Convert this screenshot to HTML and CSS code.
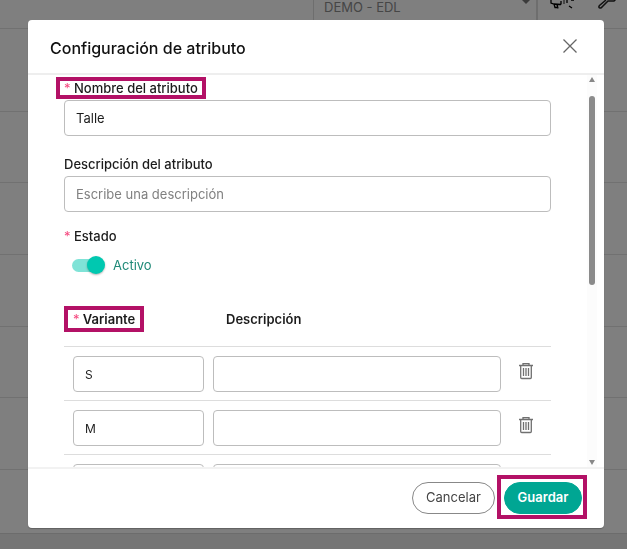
FILE: index.html
```html
<!DOCTYPE html>
<html lang="es">
<head>
<meta charset="utf-8">
<meta name="viewport" content="width=device-width, initial-scale=1">
<title>Configuración de atributo</title>
<link rel="stylesheet" href="styles.css">
</head>
<body>
<div class="page">
  <header class="topbar">
    <div class="account"><span>DEMO - EDL</span><i class="caret"></i></div>
    <div class="tools">
      <svg width="28" height="12" viewBox="0 0 28 12" fill="none" stroke="#000" stroke-width="1.3"><path d="M3 0v3l3 1 7 .5M6 4l1 3.500h2M9 4.500l1 4M13 4.500V1"/><path d="M16 0v4" stroke="#555"/><path d="M19 0v3M23 0h3M21 6l3 2"/></svg>
      <svg width="22" height="12" viewBox="0 0 22 12" fill="none" stroke="#222" stroke-width="1.500"><path d="M9 0 2.500 5.500q-1.500 2 .5 2.500 1.200.3 2-1L11 1h6l2-2"/></svg>
    </div>
  </header>
  <div class="line first"></div>
  <div class="line"></div>
  <div class="line"></div>
  <div class="line"></div>
  <div class="line"></div>
  <div class="line"></div>
  <div class="line last"></div>
</div>
<div class="backdrop">
  <section class="modal" role="dialog" aria-labelledby="title">
    <header class="modal-head">
      <h1 id="title">Configuración de atributo</h1>
      <button class="icon-button close" type="button" aria-label="Cerrar">
        <svg width="16" height="16" viewBox="0 0 16 16" stroke="#666" stroke-width="1.300"><path d="M1.500 1.500l13 13M14.500 1.500l-13 13"/></svg>
      </button>
    </header>
    <div class="modal-body">
      <form class="content" id="form">
        <div class="field">
          <label class="mark mark-label" for="name"><span class="req">*</span> Nombre del atributo</label>
          <input id="name" type="text" value="Talle">
        </div>
        <div class="field">
          <label for="desc">Descripción del atributo</label>
          <input id="desc" type="text" placeholder="Escribe una descripción">
        </div>
        <div class="state">
          <label for="state"><span class="req">*</span> Estado</label>
          <div class="switch-row">
            <input class="switch" id="state" type="checkbox" checked>
            <span>Activo</span>
          </div>
        </div>
        <table>
          <thead>
            <tr>
              <th class="col-variant"><span class="mark mark-th"><span class="req">*</span> Variante</span></th>
              <th class="col-desc">Descripción</th>
              <th class="col-action"></th>
            </tr>
          </thead>
          <tbody>
            <tr>
              <td><input type="text" value="S" aria-label="Variante"></td>
              <td><input type="text" aria-label="Descripción"></td>
              <td><button class="icon-button" type="button" aria-label="Eliminar"><svg width="16" height="18" viewBox="0 0 16 18" fill="none" stroke="#707070" stroke-width="1.300"><path d="M1 3.500h14M5 3V1.700h6V3M2.700 4v11.500q0 1 1 1h8.600q1 0 1-1V4M5.500 6v8M8 6v8M10.500 6v8"/></svg></button></td>
            </tr>
            <tr>
              <td><input type="text" value="M" aria-label="Variante"></td>
              <td><input type="text" aria-label="Descripción"></td>
              <td><button class="icon-button" type="button" aria-label="Eliminar"><svg width="16" height="18" viewBox="0 0 16 18" fill="none" stroke="#707070" stroke-width="1.300"><path d="M1 3.500h14M5 3V1.700h6V3M2.700 4v11.500q0 1 1 1h8.600q1 0 1-1V4M5.500 6v8M8 6v8M10.500 6v8"/></svg></button></td>
            </tr>
            <tr>
              <td><input type="text" aria-label="Variante"></td>
              <td><input type="text" aria-label="Descripción"></td>
              <td></td>
            </tr>
          </tbody>
        </table>
      </form>
      <div class="scrollbar" aria-hidden="true">
        <i class="arrow up"></i>
        <div class="track"><div class="thumb"></div></div>
        <i class="arrow down"></i>
      </div>
    </div>
    <footer class="modal-foot">
      <button class="btn" type="button">Cancelar</button>
      <span class="mark mark-btn"><button class="btn primary" type="submit" form="form">Guardar</button></span>
    </footer>
  </section>
</div>
</body>
</html>
```
FILE: styles.css
```css
* { box-sizing: border-box; }

body {
  margin: 0;
  height: 100vh;
  overflow: hidden;
  font-family: Inter, "Liberation Sans", sans-serif;
  font-size: 13px;
  line-height: 16px;
  color: #1c1c1c;
  background: #fff;
}

button, input { font: inherit; color: inherit; }

/* Page behind the dialog */
.page {
  display: flex;
  flex-direction: column;
  height: 100%;
  background: #eaeaea;
}
.topbar {
  display: flex;
  justify-content: flex-end;
  height: 28px;
  background: #fff;
}
.account {
  display: flex;
  justify-content: space-between;
  width: 225px;
  padding: 0 6px 0 10px;
  border: solid #dcdcdc;
  border-width: 0 2px 0 1px;
  line-height: 14px;
  color: #8c8c8c;
}
.caret {
  border: solid transparent;
  border-width: 4px 4px 0;
  border-top-color: #777;
  height: 4px;
}
.tools {
  display: flex;
  justify-content: space-between;
  width: 89px;
  padding: 0 8px 0 10px;
}
.line {
  flex: 72 1 0;
  border-top: 1px solid #e2e2e2;
  background: #fff;
}
.line.first { flex-grow: 83; }
.line.last {
  flex-grow: 64;
  border-bottom: 1px solid #d8d8d8;
  margin-bottom: 15px;
}

.backdrop {
  position: fixed;
  inset: 0;
  padding: 20px 23px 21px 28px;
  background: rgba(0, 0, 0, .5);
}
.modal {
  display: flex;
  flex-direction: column;
  height: 100%;
  background: #fff;
  border-radius: 4px;
  box-shadow: 0 1px 1px rgba(0, 0, 0, .25);
}

.modal-head {
  display: flex;
  align-items: center;
  justify-content: space-between;
  height: 55px;
  padding: 2px 26px 0 22px;
  border-bottom: 2px solid #eee;
}
h1 {
  margin: 0;
  font-size: 16px;
  line-height: 20px;
  font-weight: 500;
  color: #111;
}
.icon-button {
  display: inline-flex;
  padding: 0;
  border: 0;
  background: none;
}
.close { padding-bottom: 4px; }

.modal-body {
  display: flex;
  flex: 1;
  min-height: 0;
  padding-right: 7px;
}
.content {
  flex: 1;
  padding: 5px 36px 0;
  overflow: hidden;
}
.field { margin-bottom: 20px; }
.state { margin-top: -4px; }
label {
  display: block;
  width: max-content;
  margin-bottom: 4px;
  font-weight: 500;
}
.req {
  font-weight: 400;
  color: #f5487f;
}
input[type="text"] {
  display: block;
  width: 100%;
  height: 36px;
  padding: 0 11px;
  border: 1px solid #bdbdbd;
  border-radius: 4px;
  background: #fff;
}
input::placeholder { color: #808080; opacity: 1; }

.switch-row {
  display: flex;
  align-items: center;
  gap: 9px;
  margin-left: 8px;
  height: 34px;
  color: #1f8a78;
}
.switch {
  appearance: none;
  position: relative;
  width: 32px;
  height: 13px;
  margin: 0;
  border-radius: 7px;
  background: #80e3d7;
}
.switch::after {
  content: "";
  position: absolute;
  right: -1px;
  top: -3px;
  width: 18px;
  height: 18px;
  border-radius: 50%;
  background: #00c8b0;
  box-shadow: 0 1px 2px rgba(0, 0, 0, .3);
}

/* Highlight frames */
.mark { position: relative; }
.mark::after {
  content: "";
  position: absolute;
  border: 4px solid #b31166;
  pointer-events: none;
}
.mark-label::after { inset: -3px -8px; }
.mark-th::after { inset: -5px -9px; }
.mark-btn::after { inset: -7px -5px -5px -7px; }

table {
  width: 100%;
  margin-top: 10px;
  border-collapse: collapse;
  table-layout: fixed;
}
.col-variant { width: 140px; }
.col-action { width: 50px; }
th {
  height: 54px;
  padding: 0 0 0 9px;
  border-bottom: 1px solid #ddd;
  font-weight: 600;
  text-align: left;
}
.col-desc { padding-left: 22px; }
td {
  height: 54px;
  padding: 2px 0 0 9px;
  border-bottom: 1px solid #ddd;
}
td input[type="text"] { font-size: 12px; }
td:last-child {
  padding: 0 0 4px;
  text-align: center;
  vertical-align: middle;
}
td .icon-button { vertical-align: middle; }

.scrollbar {
  display: flex;
  flex-direction: column;
  align-items: center;
  width: 10px;
  padding: 2px 0;
  background: #fcfcfc;
}
.arrow {
  border: solid transparent;
  border-width: 0 3px;
}
.up { border-bottom: 5px solid #888; }
.down { border-top: 5px solid #888; }
.track {
  flex: 1;
  width: 6px;
  padding: 14px 0;
}
.thumb {
  height: 54%;
  border-radius: 3px;
  background: #8b8b8b;
}

.modal-foot {
  display: flex;
  align-items: flex-start;
  justify-content: flex-end;
  gap: 9px;
  height: 61px;
  padding: 13px 22px 0;
  border-top: 2px solid #f2f2f2;
}
.btn {
  display: block;
  min-width: 83px;
  height: 32px;
  padding: 0 12px 3px;
  border: 1px solid #888;
  border-radius: 16px;
  background: #fff;
  color: #444;
}
.primary {
  min-width: 78px;
  border-color: #00a693;
  background: #00a693;
  color: #fff;
  font-weight: 600;
}
```
